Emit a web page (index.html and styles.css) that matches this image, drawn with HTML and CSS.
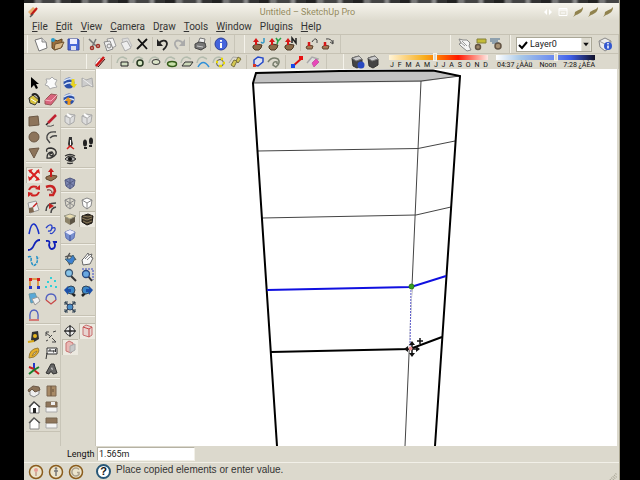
FILE: index.html
```html
<!DOCTYPE html>
<html lang="en">
<head>
  <meta charset="UTF-8" />
  <meta name="viewport" content="width=device-width, initial-scale=1.0"/>
  <title>Untitled - SketchUp Pro</title>
  <link rel="stylesheet" href="styles.css">
</head>
<body>
  <!-- Icon set -->
  <svg class="icons" aria-hidden="true">
    <symbol id="new" viewBox="0 0 16 16"><path d="M2 4l7-2 4 4 1 6-8 3z" fill="#fff" stroke="#777"/><path d="M9 2l0 4h4" fill="#ddd" stroke="#888"/></symbol>
    <symbol id="open" viewBox="0 0 16 16"><path d="M3 5l4-1 1 1 5-2v8l-7 3-3-2z" fill="#9a6f3c" stroke="#5e4425"/><path d="M6 8l9-2-3 6-7 2z" fill="#d9b98a" stroke="#6e5330"/><circle cx="4" cy="4" r="2" fill="#2a9ac8"/></symbol>
    <symbol id="save" viewBox="0 0 16 16"><path d="M3 3h10l1 1v10H3z" fill="#4a68d8" stroke="#3848a0"/><path d="M5 3h7v5H5z" fill="#eef"/><path d="M6 10h5v4H6z" fill="#dde"/></symbol>
    <symbol id="cut" viewBox="0 0 16 16"><path d="M3 3l7 7M10 3l-4 8" stroke="#777" stroke-width="1.500"/><circle cx="6" cy="12" r="1.500" fill="none" stroke="#a03028" stroke-width="1.500"/><circle cx="12" cy="10" r="1.500" fill="none" stroke="#a03028" stroke-width="1.500"/></symbol>
    <symbol id="copy" viewBox="0 0 16 16"><path d="M5 3l6-1 3 8-6 3z" fill="#f4f4f4" stroke="#999"/><path d="M2 6l6-1 3 8-6 2z" fill="#eee" stroke="#888"/><circle cx="7" cy="10" r="2" fill="none" stroke="#888"/></symbol>
    <symbol id="paste" viewBox="0 0 16 16"><path d="M4 3l6-1 4 8-7 3z" fill="#ddd" stroke="#bbb"/><path d="M3 7l6-2 4 7-6 3z" fill="#eee" stroke="#aaa"/></symbol>
    <symbol id="delete" viewBox="0 0 16 16"><path d="M4 3l9 10M13 3L3 13" stroke="#111" stroke-width="1.800"/></symbol>
    <symbol id="undo" viewBox="0 0 16 16"><path d="M4 7c6-6 12 0 4 7" fill="none" stroke="#222" stroke-width="1.800"/><path d="M2 3v7h6z" fill="#222"/></symbol>
    <symbol id="redo" viewBox="0 0 16 16"><path d="M12 7C6 1 0 7 7 13" fill="none" stroke="#aaa" stroke-width="1.800"/><path d="M14 3v7H8z" fill="#aaa"/></symbol>
    <symbol id="print" viewBox="0 0 16 16"><path d="M6 7l2-5 5 1-1 5z" fill="#eee" stroke="#777"/><path d="M3 8l4-2 6 1 1 4-5 3-6-2z" fill="#777" stroke="#444"/><path d="M5 10l6 1" stroke="#ccc"/></symbol>
    <symbol id="info" viewBox="0 0 16 16"><circle cx="8" cy="8" r="6" fill="#4464dc" stroke="#2c409c"/><path d="M8 7v5M8 4v1.800" stroke="#fff" stroke-width="2"/></symbol>
    <symbol id="tray" viewBox="0 0 16 16"><path d="M3 10l3-2 6 1-1 3-2 2-4 0-2-2z" fill="#8c6c4a" stroke="#4c3824"/><path d="M6 9V5" stroke="#d81818" stroke-width="2"/><path d="M3 6L6 2l3 4z" fill="#d81818"/></symbol>
    <symbol id="tray-get" viewBox="0 0 16 16"><use href="#tray"/><path d="M14 2v4q-1 2-3 0" fill="none" stroke="#3098c8" stroke-width="1.500"/></symbol>
    <symbol id="tray-share" viewBox="0 0 16 16"><use href="#tray"/><path d="M10 2l2 3 3-3M12 5l-1 3" fill="none" stroke="#28a048" stroke-width="1.500"/></symbol>
    <symbol id="tray-next" viewBox="0 0 16 16"><use href="#tray"/><path d="M10 7V2l4 5V2" fill="none" stroke="#222" stroke-width="1.500"/></symbol>
    <symbol id="tray-left" viewBox="0 0 16 16"><path d="M3 11l3-2 4 1-1 3H4z" fill="#a47a58" stroke="#5c442c"/><path d="M6 10V6" stroke="#d81818" stroke-width="2.500"/><path d="M9 6q3-5 5-2v3" fill="none" stroke="#444"/></symbol>
    <symbol id="tray-right" viewBox="0 0 16 16"><path d="M3 11l3-2 4 1-1 3H4z" fill="#a47a58" stroke="#5c442c"/><path d="M6 10V6" stroke="#d81818" stroke-width="2.500"/><path d="M7 3q5-1 7 4M11 6l3 2 0-4" fill="none" stroke="#444"/></symbol>
    <symbol id="hand" viewBox="0 0 16 16"><path d="M3 3l4 1 4 0 3 3-1 3 2 4-4 1-5-4-3-3 2-1z" fill="#f4f4f4" stroke="#888"/><path d="M6 5l5 5M4 6l5 4" stroke="#999"/></symbol>
    <symbol id="gear-note" viewBox="0 0 16 16"><path d="M5 3h9v4H5z" fill="#c4bc38" stroke="#85803a"/><circle cx="6" cy="11" r="2.500" fill="#9c866a" stroke="#635444" stroke-width="1.500"/></symbol>
    <symbol id="gear-page" viewBox="0 0 16 16"><path d="M2 3h10M2 5h8M4 7h7" stroke="#768fa4" stroke-width="1.500"/><circle cx="10" cy="10" r="3" fill="#a89274" stroke="#635444" stroke-width="1.500"/></symbol>
    <symbol id="layer-info" viewBox="0 0 16 16"><path d="M2 5l6-3 6 3-1 7-5 3-5-4z" fill="#ececec" stroke="#888"/><path d="M2 5l6 3 6-3" fill="none" stroke="#999"/><circle cx="11" cy="10" r="4" fill="#3458d0"/><path d="M11 9.500v3M11 7v1.500" stroke="#fff" stroke-width="1.500"/></symbol>
    <symbol id="crayon" viewBox="0 0 16 16"><path d="M3 9L7 4l4 1-4 7-3 1z" fill="#fff" stroke="#aaa"/><path d="M4 12L12 3" stroke="#d01818" stroke-width="2.500"/><path d="M6 13l7-8" stroke="#400"/></symbol>
    <symbol id="loop" viewBox="0 0 16 16"><path d="M2 9q1-6 6-6l4 2" fill="none" stroke="#b4bcae" stroke-width="1.500"/></symbol>
    <symbol id="sb-rect" viewBox="0 0 16 16"><use href="#loop"/><path d="M6 8h7v4H6z" fill="#d0dcc0" stroke="#222"/></symbol>
    <symbol id="sb-circle" viewBox="0 0 16 16"><use href="#loop"/><circle cx="9" cy="9" r="3" fill="#d4e4c0" stroke="#263820" stroke-width="1.500"/></symbol>
    <symbol id="sb-oval" viewBox="0 0 16 16"><use href="#loop"/><ellipse cx="9" cy="8" rx="4" ry="2.500" fill="#dce4c8" stroke="#333"/></symbol>
    <symbol id="sb-ring" viewBox="0 0 16 16"><use href="#loop"/><ellipse cx="9" cy="10" rx="4.500" ry="2.500" fill="#c8e0a8" stroke="#345c18" stroke-width="1.500"/></symbol>
    <symbol id="sb-para" viewBox="0 0 16 16"><use href="#loop"/><path d="M6 8h8l-3 4H3z" fill="#ccd8b8" stroke="#333"/></symbol>
    <symbol id="sb-arc" viewBox="0 0 16 16"><use href="#loop"/><path d="M3 13Q8 4 14 13" fill="none" stroke="#3090d8" stroke-width="1.500"/></symbol>
    <symbol id="sb-poly" viewBox="0 0 16 16"><use href="#loop"/><circle cx="9" cy="9" r="3.500" fill="#ddc" stroke="#555"/><path d="M5 8h2M10 5h2M12 9h2M8 12h3" stroke="#e8d800" stroke-width="2.500"/></symbol>
    <symbol id="sb-gold" viewBox="0 0 16 16"><path d="M2 9l4-6 8 1" fill="none" stroke="#aaa"/><path d="M4 11l3-5 3 1-3 6zM9 7l2-4 3 2-3 4z" fill="#d4c850" stroke="#7a7240"/></symbol>
    <symbol id="sb-blue" viewBox="0 0 16 16"><path d="M4 11V6l4-3 5 1v4l-5 4z" fill="#dce0ee" stroke="#2448c8" stroke-width="1.500"/><path d="M3 10h3v3H3z" fill="#d83828"/></symbol>
    <symbol id="sb-swirl" viewBox="0 0 16 16"><path d="M2 8q4-6 10-3 3 4-2 8l-3-2q0-4 4-3l0 2" fill="none" stroke="#777d6c" stroke-width="1.500"/></symbol>
    <symbol id="sb-line" viewBox="0 0 16 16"><path d="M4 12l9-8" stroke="#d81010" stroke-width="2"/><path d="M2 10h4v4H2z" fill="#1848e8"/><path d="M10 2h4v4h-4z" fill="#e81010"/></symbol>
    <symbol id="sb-pink" viewBox="0 0 16 16"><path d="M2 9l5-6 6 2-4 6" fill="#ddd" stroke="#aaa" stroke-width="1.500"/><path d="M7 9l4-4 3 3-5 5z" fill="#e848b8" stroke="#c858a8"/></symbol>
    <symbol id="box" viewBox="0 0 16 16"><path d="M3 4l7-2 3 3v6l-5 3-4-2z" fill="#444" stroke="#333"/><path d="M3 4l7-2 3 3-6 2z" fill="#ccc" stroke="#777"/></symbol>
    <symbol id="box-info" viewBox="0 0 16 16"><use href="#box"/><circle cx="12" cy="11" r="3.500" fill="#2848c0"/></symbol>

    <symbol id="select" viewBox="0 0 16 16"><path d="M5 2v11l3-3 2 4 2-1-2-4h3z" fill="#000"/></symbol>
    <symbol id="component" viewBox="0 0 16 16"><path d="M3 4l4 0 2-2 2 2 3 1-2 4 2 3-5 1-2 1-2-3-3-1 2-3z" fill="#fafafa" stroke="#aaa"/></symbol>
    <symbol id="paint" viewBox="0 0 16 16"><path d="M3 7l4-3 6 5-4 5-5-2z" fill="#d8c440" stroke="#333"/><path d="M6 4q4-3 7 3v5" fill="none" stroke="#222" stroke-width="2"/><path d="M5 8l5 3" stroke="#fff"/></symbol>
    <symbol id="eraser" viewBox="0 0 16 16"><path d="M2 9l6-6 6 1-1 4-5 6-6-1z" fill="#d8647c" stroke="#955"/><path d="M2 9l6 1 6-6" fill="none" stroke="#f4b4c0"/></symbol>
    <symbol id="rect" viewBox="0 0 16 16"><path d="M3 4l9-1 1 9-10 1z" fill="#8d745a" stroke="#6c5844"/></symbol>
    <symbol id="pencil" viewBox="0 0 16 16"><path d="M5 10l8-8" stroke="#c02030" stroke-width="2.500"/><path d="M3 12l2-2" stroke="#222" stroke-width="1.500"/><path d="M4 13q4 1 7-1" fill="none" stroke="#555"/></symbol>
    <symbol id="circle" viewBox="0 0 16 16"><circle cx="8" cy="8" r="5" fill="#8d745a" stroke="#6c5844"/></symbol>
    <symbol id="arc" viewBox="0 0 16 16"><path d="M13 3Q3 2 4 10l3 4M7 9q3-3 7-2" fill="none" stroke="#444" stroke-width="1.300"/></symbol>
    <symbol id="polygon" viewBox="0 0 16 16"><path d="M3 4l10-1-5 10z" fill="#8d745a" stroke="#6c5844"/></symbol>
    <symbol id="freehand" viewBox="0 0 16 16"><path d="M4 7q-2-4 4-4 6 1 5 6-4 5-9 4 0-6 5-6 3 3-1 4-3-2 1-3" fill="none" stroke="#333" stroke-width="1.300"/></symbol>
    <symbol id="move" viewBox="0 0 16 16"><path d="M4 4l8 8M12 4l-8 8" stroke="#d82020" stroke-width="2"/><path d="M2 3l5-1-3 4zM13 2l1 5-4-3zM3 14l-1-5 4 3zM14 13l-5 1 3-4z" fill="#d82020"/></symbol>
    <symbol id="pushpull" viewBox="0 0 16 16"><path d="M3 10l5-2 6 1-1 2-5 3-5-2z" fill="#947050" stroke="#604830"/><path d="M8 10V5" stroke="#c81c1c" stroke-width="2"/><path d="M5 5l3-4 3 4z" fill="#c81c1c"/></symbol>
    <symbol id="rotate" viewBox="0 0 16 16"><path d="M3 7q2-5 8-3M13 9q-2 5-8 3" fill="none" stroke="#d02020" stroke-width="2"/><path d="M9 6l5 1V2zM7 10l-5-1v5z" fill="#d02020"/></symbol>
    <symbol id="follow" viewBox="0 0 16 16"><path d="M3 4q8-3 9 4l-2 4H6" fill="none" stroke="#c82424" stroke-width="2.500"/><path d="M4 7q5-1 5 3" fill="none" stroke="#622"/></symbol>
    <symbol id="scale" viewBox="0 0 16 16"><path d="M2 4l8-2 3 9-9 3z" fill="#eee" stroke="#999"/><path d="M3 9l4-1 1 5-5 1z" fill="#806850"/><path d="M7 8l4-4" stroke="#c82020" stroke-width="1.500"/></symbol>
    <symbol id="offset" viewBox="0 0 16 16"><path d="M3 12Q3 4 13 4M8 14q0-5 5-6" fill="none" stroke="#444" stroke-width="1.500"/><path d="M6 4l5 3-5 3z" fill="#c82020"/></symbol>
    <symbol id="bz1" viewBox="0 0 16 16"><path d="M3 13Q5 2 8 3t5 10" fill="none" stroke="#1830c8" stroke-width="1.500"/></symbol>
    <symbol id="bz2" viewBox="0 0 16 16"><path d="M3 7q4-5 6-2 0 6-4 5M8 8q5-3 4 1-3 5-5 3" fill="none" stroke="#2840c8" stroke-width="1.300"/></symbol>
    <symbol id="bz3" viewBox="0 0 16 16"><path d="M2 13q4 0 6-5t6-5" fill="none" stroke="#1020b8" stroke-width="1.800"/></symbol>
    <symbol id="bz4" viewBox="0 0 16 16"><path d="M3 4q5-1 3 4 1 6 5 3 2-2 0-6l3 0" fill="none" stroke="#1020b8" stroke-width="1.800"/></symbol>
    <symbol id="bz5" viewBox="0 0 16 16"><path d="M2 4q4-2 3 4 2 7 5 3 2-2 1-7l2 1" fill="none" stroke="#2090c8" stroke-width="1.500" stroke-dasharray="3 1"/></symbol>
    <symbol id="pts" viewBox="0 0 16 16"><path d="M4 13V4h8v9" fill="none" stroke="#d88828" stroke-width="1.500"/><path d="M3 3h3v3H3zM11 3h3v3h-3z" fill="#d82020"/><path d="M3 11h3v3H3zM11 11h3v3h-3z" fill="#2838c8"/></symbol>
    <symbol id="dots" viewBox="0 0 16 16"><path d="M7 3h2M4 7h2M11 6h2M2 12h2M7 11h2M12 12h2" stroke="#30d0d8" stroke-width="2"/></symbol>
    <symbol id="pages" viewBox="0 0 16 16"><path d="M3 3l6-1 3 8-7 2z" fill="#58a8d8" stroke="#69a"/><path d="M6 8l6-2 2 4-5 4z" fill="#eee" stroke="#999"/></symbol>
    <symbol id="loop1" viewBox="0 0 16 16"><path d="M3 9q0-6 5-6t5 6" fill="none" stroke="#5060c0" stroke-width="1.300"/><path d="M3 9l5 4 5-4" fill="none" stroke="#c84848" stroke-width="1.300"/></symbol>
    <symbol id="loop2" viewBox="0 0 16 16"><path d="M4 12Q3 3 8 3t4 9" fill="none" stroke="#5060c0" stroke-width="1.300"/><path d="M3 13h10" stroke="#d04848" stroke-width="1.300"/></symbol>
    <symbol id="tape" viewBox="0 0 16 16"><path d="M6 3l6-1 1 8-5 3-3-2z" fill="#333"/><circle cx="9" cy="7" r="2" fill="#e8b820"/><path d="M2 13l6-1" stroke="#d8a818" stroke-width="2"/></symbol>
    <symbol id="dimension" viewBox="0 0 16 16"><path d="M3 4l4 3M9 9l4 4M3 7V3h3M9 13h4M10 3l3-1M3 12l2-1M6 9l3-3" fill="none" stroke="#444"/></symbol>
    <symbol id="protractor" viewBox="0 0 16 16"><path d="M3 13Q3 4 12 3q3 4-4 9z" fill="#e8b028" stroke="#9c7c34"/><path d="M6 11q1-4 5-5-1 3-5 5z" fill="#dcd9cd" stroke="#9c7c34"/></symbol>
    <symbol id="text" viewBox="0 0 16 16"><path d="M4 3h10v6H4z" fill="#f4f4f4" stroke="#333"/><path d="M6 7V5h2v2M10 5v2h1V5M12.500 4v3M4 8l-1 6" fill="none" stroke="#333"/></symbol>
    <symbol id="axes" viewBox="0 0 16 16"><path d="M8 9V2" stroke="#2038c8" stroke-width="2"/><path d="M8 9l5 4M8 8L3 6" stroke="#c82020" stroke-width="2"/><path d="M8 9l-5 4M8 9l5-3" stroke="#18802c" stroke-width="2"/></symbol>
    <symbol id="text3d" viewBox="0 0 16 16"><path d="M3 12l5-9h3l3 9-4 1-1-2H7l-1 2z" fill="#666" stroke="#333"/><path d="M8 8l1-2 1 3z" fill="#ddd"/></symbol>
    <symbol id="iso" viewBox="0 0 16 16"><path d="M4 8v4l4 2 5-3V7" fill="#eee" stroke="#888"/><path d="M2 7l5-4 6 1 1 3-5 2-3-3-3 3z" fill="#8c7358" stroke="#6c5846"/></symbol>
    <symbol id="top" viewBox="0 0 16 16"><path d="M4 3h9v10H4z" fill="#a88a66" stroke="#7c6650"/><path d="M8 3v10M10 6v3" stroke="#644e38"/></symbol>
    <symbol id="front" viewBox="0 0 16 16"><path d="M4 8v6h9V8L8 3z" fill="#fff" stroke="#777"/><path d="M3 8l5-5 6 5" fill="none" stroke="#444" stroke-width="1.300"/><path d="M7 9h3v5H7z" fill="#222"/></symbol>
    <symbol id="right" viewBox="0 0 16 16"><path d="M3 7h11v6H3z" fill="#f4f4f4" stroke="#aaa"/><path d="M3 3h11v5H3z" fill="#8f765c" stroke="#77644f"/><path d="M8 3h4v3H8z" fill="#eee"/></symbol>
    <symbol id="back" viewBox="0 0 16 16"><path d="M4 8v6h9V8L8 3z" fill="#fff" stroke="#888"/><path d="M3 8l5-5 6 5" fill="none" stroke="#555" stroke-width="1.300"/></symbol>
    <symbol id="left" viewBox="0 0 16 16"><path d="M3 7h11v6H3z" fill="#f4f4f4" stroke="#aaa"/><path d="M3 3h11v5H3z" fill="#8f765c" stroke="#77644f"/></symbol>

    <symbol id="earth" viewBox="0 0 16 16"><circle cx="7" cy="8" r="5.500" fill="#2c50a8"/><path d="M2 6q5-4 10-1M2 10q5-4 10-1" fill="none" stroke="#dce8fa" stroke-width="1.500"/></symbol>
    <symbol id="earth-get" viewBox="0 0 16 16"><use href="#earth"/><path d="M11 4v6" stroke="#e8d420" stroke-width="3"/><path d="M8 9h7l-3 4z" fill="#e8d420"/></symbol>
    <symbol id="earth-put" viewBox="0 0 16 16"><use href="#earth"/><path d="M7 9v5" stroke="#e89820" stroke-width="3"/><path d="M3 10h7L6 6z" fill="#e89820"/></symbol>
    <symbol id="terrain" viewBox="0 0 16 16"><path d="M3 3l4 2 6-2 1 9-5-2-6 2z" fill="#ccc" stroke="#aaa"/><path d="M4 4l9 7" stroke="#eee"/></symbol>
    <symbol id="share" viewBox="0 0 16 16"><path d="M3 5l4-2 6 1-1 7-5 3-4-3z" fill="#ddd" stroke="#aaa"/><path d="M3 5l5 2 5-3M8 7v6" fill="none" stroke="#aaa"/><path d="M5 3l4 3" stroke="#fff" stroke-width="2"/></symbol>
    <symbol id="position" viewBox="0 0 16 16"><path d="M7 2h3v3l1 4-2 3H7L6 9z" fill="#333"/><path d="M8.500 5v5" stroke="#fff"/><path d="M5 14l3-3 4 3" fill="none" stroke="#d82020" stroke-width="1.500"/></symbol>
    <symbol id="walk" viewBox="0 0 16 16"><ellipse cx="6" cy="8" rx="2" ry="3.500" fill="#222"/><ellipse cx="12" cy="6" rx="2" ry="3.500" fill="#222"/><path d="M5 13h3M10 11h3" stroke="#222" stroke-width="2"/></symbol>
    <symbol id="look" viewBox="0 0 16 16"><path d="M3 8q5-6 11 0-5 5-11 0z" fill="#777" stroke="#333"/><path d="M3 5q5-3 10 0M5 12q3 1 6 0" fill="none" stroke="#333" stroke-width="1.300"/><circle cx="8" cy="8" r="2" fill="#111"/><path d="M4 8h2M10 8h2" stroke="#ddd"/></symbol>
    <symbol id="xray" viewBox="0 0 16 16"><path d="M3 5l5-2 5 2-1 6-4 3-4-3z" fill="#7c86b0" stroke="#545c84"/><path d="M3 5l5 3 5-3M8 3v11M4 11l4-3 4 3" fill="none" stroke="#545c84"/></symbol>
    <symbol id="wire" viewBox="0 0 16 16"><path d="M3 5l5-2 5 2-1 6-4 3-4-3zM3 5l5 3 5-3M8 3v11M4 11l4-3 4 3" fill="none" stroke="#888"/></symbol>
    <symbol id="hidden" viewBox="0 0 16 16"><path d="M3 5l5-2 5 2-1 6-4 3-4-3z" fill="#fff" stroke="#888"/><path d="M3 5l5 3 5-3M8 8v6" fill="none" stroke="#888"/></symbol>
    <symbol id="shaded" viewBox="0 0 16 16"><path d="M3 5v6l5 3V8z" fill="#8c8268"/><path d="M13 5v6l-5 3V8z" fill="#5c5444"/><path d="M2 5l6-2 6 2-6 3z" fill="#e8dcb0" stroke="#998"/></symbol>
    <symbol id="textured" viewBox="0 0 16 16"><path d="M3 5l6-2 5 2-1 7-5 2-5-3z" fill="#3c3428" stroke="#181410"/><path d="M3 7l5 2 5-2M4 10l4 2 5-2M4 5l5 1 4-1" fill="none" stroke="#8c7c5c"/></symbol>
    <symbol id="mono" viewBox="0 0 16 16"><path d="M3 5l5-2 5 2-1 6-4 3-4-3z" fill="#7890d0" stroke="#6070b0"/><path d="M3 5l5-2 5 2-5 3z" fill="#eef"/><path d="M8 8v6" stroke="#405090"/></symbol>
    <symbol id="orbit" viewBox="0 0 16 16"><path d="M8 2q-5 6 0 12M3 6q7-3 11 3" fill="none" stroke="#555" stroke-width="1.300"/><path d="M3 8l5 0 3-4 2 4-3 5-3-1z" fill="#3c80d0" stroke="#467"/></symbol>
    <symbol id="pan" viewBox="0 0 16 16"><path d="M4 14l-1-5 2-2 4-5 1 2 3-1-1 3 2 1-3 6z" fill="#f8f8f8" stroke="#666"/><path d="M6 8l4-4M8 9l4-4" stroke="#888"/></symbol>
    <symbol id="zoom" viewBox="0 0 16 16"><path d="M9 9l5 5" stroke="#333" stroke-width="2"/><circle cx="7" cy="6" r="3.500" fill="#88c4e8" stroke="#3c5874" stroke-width="1.300"/></symbol>
    <symbol id="zoomwin" viewBox="0 0 16 16"><path d="M3 2h11v11" fill="none" stroke="#3848c8" stroke-dasharray="2 1"/><path d="M9 9l4 5" stroke="#333" stroke-width="2"/><circle cx="7" cy="7" r="3.500" fill="#68a8e0" stroke="#284880" stroke-width="1.300"/></symbol>
    <symbol id="prev" viewBox="0 0 16 16"><path d="M9 9l4 4" stroke="#222" stroke-width="2.500"/><circle cx="9" cy="7" r="4" fill="#3c88c8" stroke="#345"/><path d="M2 7l4-4v3h3v3H6v3z" fill="#1c50a8"/></symbol>
    <symbol id="next" viewBox="0 0 16 16"><path d="M7 9l-4 4" stroke="#222" stroke-width="2.500"/><circle cx="7" cy="7" r="4" fill="#3c88c8" stroke="#345"/><path d="M14 7l-4-4v3H7v3h3v3z" fill="#1c50a8"/></symbol>
    <symbol id="extents" viewBox="0 0 16 16"><path d="M3 3l10 10M13 3L3 13" stroke="#345" stroke-width="1.500"/><path d="M3 6V3h3M10 3h3v3M3 10v3h3M13 10v3h-3" fill="none" stroke="#345"/><circle cx="8" cy="8" r="3" fill="#4c90c8" stroke="#346"/></symbol>
    <symbol id="section" viewBox="0 0 16 16"><circle cx="8" cy="8" r="4.500" fill="#eee" stroke="#333"/><path d="M8 2v12M2 8h12" stroke="#333" stroke-width="1.300"/><circle cx="8" cy="8" r="1.500" fill="#333"/></symbol>
    <symbol id="sec-plane" viewBox="0 0 16 16"><path d="M4 4l3-2 6 2v8l-3 2-6-2z" fill="#e8d4d0" stroke="#c87070"/><path d="M4 4l6 2v8M10 6l3-2" fill="none" stroke="#c84848"/></symbol>
    <symbol id="sec-cut" viewBox="0 0 16 16"><path d="M4 4l3-2 4 2v8l-2 2-5-2z" fill="#e8b8b4" stroke="#c87070"/><path d="M8 7l5-2v6l-5 3z" fill="#c8c8c8" stroke="#aaa"/></symbol>
    <symbol id="leaf" viewBox="0 0 12 12"><path d="M1 11q2-2 2-5 3-2 6-3l2-2q0 4-3 6-3 2-4 2z" fill="#91834e"/></symbol>
  </svg>

  <div class="window">
    <header class="titlebar">
      <svg class="logo" viewBox="0 0 12 12"><path d="M1 6l5-5 4 3-5 6z" fill="#e8b070"/><path d="M4 9l6-7" stroke="#c01818" stroke-width="2"/><path d="M3 11l3-3" stroke="#555" stroke-width="1.500"/></svg>
      <h1>Untitled – SketchUp Pro</h1>
      <div class="winbtns">
        <button title="Shade"><svg viewBox="0 0 12 12"><path d="M5 3v6L2 6zM7 3v6l3-3z" fill="#fff"/></svg></button>
        <button title="Tray"><svg viewBox="0 0 12 12"><path d="M2 2.500h8v7H2zM2 4h8M4 7h4" fill="none" stroke="#fff"/></svg></button>
        <button title="Minimize"><svg><use href="#leaf"/></svg></button>
        <button title="Maximize"><svg><use href="#leaf"/></svg></button>
        <button title="Close"><svg><use href="#leaf"/></svg></button>
      </div>
    </header>

    <nav class="menu">
      <a href="#"><u>F</u>ile</a>
      <a href="#"><u>E</u>dit</a>
      <a href="#"><u>V</u>iew</a>
      <a href="#"><u>C</u>amera</a>
      <a href="#">D<u>r</u>aw</a>
      <a href="#"><u>T</u>ools</a>
      <a href="#"><u>W</u>indow</a>
      <a href="#">Plugins</a>
      <a href="#"><u>H</u>elp</a>
    </nav>

    <div class="toolbar main">
      <div class="bar">
        <button class="tool" title="New"><svg><use href="#new"/></svg></button>
        <button class="tool" title="Open"><svg><use href="#open"/></svg></button>
        <button class="tool" title="Save"><svg><use href="#save"/></svg></button>
        <i class="sep"></i>
        <button class="tool" title="Cut"><svg><use href="#cut"/></svg></button>
        <button class="tool" title="Copy"><svg><use href="#copy"/></svg></button>
        <button class="tool" title="Paste"><svg><use href="#paste"/></svg></button>
        <button class="tool" title="Erase"><svg><use href="#delete"/></svg></button>
        <i class="sep"></i>
        <button class="tool" title="Undo"><svg><use href="#undo"/></svg></button>
        <button class="tool" title="Redo"><svg><use href="#redo"/></svg></button>
        <i class="sep"></i>
        <button class="tool" title="Print"><svg><use href="#print"/></svg></button>
        <i class="sep"></i>
        <button class="tool" title="Model Info"><svg><use href="#info"/></svg></button>
      </div>
      <div class="bar spaced">
        <button class="tool" title="Joint Push Pull"><svg><use href="#tray-get"/></svg></button>
        <button class="tool" title="Vector Push Pull"><svg><use href="#tray-share"/></svg></button>
        <button class="tool" title="Normal Push Pull"><svg><use href="#tray-next"/></svg></button>
        <i class="sep"></i>
        <button class="tool" title="Undo Push Pull"><svg><use href="#tray-left"/></svg></button>
        <button class="tool" title="Redo Push Pull"><svg><use href="#tray-right"/></svg></button>
      </div>
      <div class="bar far">
        <button class="tool" title="Interact"><svg><use href="#hand"/></svg></button>
        <button class="tool" title="Component Options"><svg><use href="#gear-note"/></svg></button>
        <button class="tool" title="Component Attributes"><svg><use href="#gear-page"/></svg></button>
      </div>
      <div class="bar layers">
        <div class="layer">
          <svg class="tick" viewBox="0 0 10 10"><path d="M1 5l3 3 5-6" fill="none" stroke="#000" stroke-width="2"/></svg>
          <select aria-label="Layer"><option>Layer0</option></select>
          <svg class="drop" viewBox="0 0 10 14"><path d="M0 0h10v14H0z" fill="#dcd9cd"/><path d="M2 5h6L5 9z" fill="#111"/></svg>
        </div>
        <button class="tool" title="Layer Manager"><svg><use href="#layer-info"/></svg></button>
      </div>
    </div>

    <div class="toolbar second">
      <div class="bar">
        <button class="tool" title="Sketchy Bevel"><svg><use href="#crayon"/></svg></button>
        <i class="sep"></i>
        <button class="tool" title="Rectangle"><svg><use href="#sb-rect"/></svg></button>
        <button class="tool" title="Circle"><svg><use href="#sb-circle"/></svg></button>
        <button class="tool" title="Oval"><svg><use href="#sb-oval"/></svg></button>
        <button class="tool" title="Ring"><svg><use href="#sb-ring"/></svg></button>
        <button class="tool" title="Parallelogram"><svg><use href="#sb-para"/></svg></button>
        <button class="tool" title="Arc"><svg><use href="#sb-arc"/></svg></button>
        <button class="tool" title="Polygon"><svg><use href="#sb-poly"/></svg></button>
        <button class="tool" title="Extrude"><svg><use href="#sb-gold"/></svg></button>
        <i class="sep"></i>
        <button class="tool" title="Outline"><svg><use href="#sb-blue"/></svg></button>
        <button class="tool" title="Swirl"><svg><use href="#sb-swirl"/></svg></button>
        <i class="sep"></i>
        <button class="tool" title="Line"><svg><use href="#sb-line"/></svg></button>
        <button class="tool" title="Erase Path"><svg><use href="#sb-pink"/></svg></button>
      </div>
      <div class="bar shadows">
        <button class="tool" title="Shadow Settings"><svg><use href="#box-info"/></svg></button>
        <button class="tool" title="Display Shadows"><svg><use href="#box"/></svg></button>
        <div class="slider">
          <input class="date" type="range" min="0" max="100" value="46" aria-label="Date">
          <div class="marks"><span>J</span><span>F</span><span>M</span><span>A</span><span>M</span><span>J</span><span>J</span><span>A</span><span>S</span><span>O</span><span>N</span><span>D</span></div>
        </div>
        <div class="slider">
          <input class="time" type="range" min="0" max="100" value="61" aria-label="Time">
          <div class="marks"><span>04:37 ¿ÀÀü</span><span>Noon</span><span>7:28 ¿ÀÈÄ</span></div>
        </div>
      </div>
    </div>

    <main class="work">
      <aside class="palette">
        <div class="col">
          <div class="group">
            <button class="tool" title="Select"><svg><use href="#select"/></svg></button>
            <button class="tool" title="Make Component"><svg><use href="#component"/></svg></button>
            <button class="tool" title="Paint Bucket"><svg><use href="#paint"/></svg></button>
            <button class="tool" title="Eraser"><svg><use href="#eraser"/></svg></button>
          </div>
          <div class="group">
            <button class="tool" title="Rectangle"><svg><use href="#rect"/></svg></button>
            <button class="tool" title="Line"><svg><use href="#pencil"/></svg></button>
            <button class="tool" title="Circle"><svg><use href="#circle"/></svg></button>
            <button class="tool" title="Arc"><svg><use href="#arc"/></svg></button>
            <button class="tool" title="Polygon"><svg><use href="#polygon"/></svg></button>
            <button class="tool" title="Freehand"><svg><use href="#freehand"/></svg></button>
          </div>
          <div class="group">
            <button class="tool on" title="Move"><svg><use href="#move"/></svg></button>
            <button class="tool" title="Push/Pull"><svg><use href="#pushpull"/></svg></button>
            <button class="tool" title="Rotate"><svg><use href="#rotate"/></svg></button>
            <button class="tool" title="Follow Me"><svg><use href="#follow"/></svg></button>
            <button class="tool" title="Scale"><svg><use href="#scale"/></svg></button>
            <button class="tool" title="Offset"><svg><use href="#offset"/></svg></button>
          </div>
          <div class="group">
            <button class="tool" title="Bezier"><svg><use href="#bz1"/></svg></button>
            <button class="tool" title="Polyline"><svg><use href="#bz2"/></svg></button>
            <button class="tool" title="Cubic"><svg><use href="#bz3"/></svg></button>
            <button class="tool" title="Spline"><svg><use href="#bz4"/></svg></button>
            <button class="tool" title="B-Spline"><svg><use href="#bz5"/></svg></button>
          </div>
          <div class="group">
            <button class="tool" title="Control Points"><svg><use href="#pts"/></svg></button>
            <button class="tool" title="Points"><svg><use href="#dots"/></svg></button>
            <button class="tool" title="Pages"><svg><use href="#pages"/></svg></button>
            <button class="tool" title="Close Loop"><svg><use href="#loop1"/></svg></button>
            <button class="tool" title="Close Line"><svg><use href="#loop2"/></svg></button>
          </div>
          <div class="group">
            <button class="tool" title="Tape Measure"><svg><use href="#tape"/></svg></button>
            <button class="tool" title="Dimensions"><svg><use href="#dimension"/></svg></button>
            <button class="tool" title="Protractor"><svg><use href="#protractor"/></svg></button>
            <button class="tool" title="Text"><svg><use href="#text"/></svg></button>
            <button class="tool" title="Axes"><svg><use href="#axes"/></svg></button>
            <button class="tool" title="3D Text"><svg><use href="#text3d"/></svg></button>
          </div>
          <div class="group last">
            <button class="tool" title="Iso"><svg><use href="#iso"/></svg></button>
            <button class="tool" title="Top"><svg><use href="#top"/></svg></button>
            <button class="tool" title="Front"><svg><use href="#front"/></svg></button>
            <button class="tool" title="Right"><svg><use href="#right"/></svg></button>
            <button class="tool" title="Back"><svg><use href="#back"/></svg></button>
            <button class="tool" title="Left"><svg><use href="#left"/></svg></button>
          </div>
        </div>
        <div class="col wide">
          <div class="group">
            <button class="tool" title="Get Current View"><svg><use href="#earth-get"/></svg></button>
            <button class="tool" title="Toggle Terrain"><svg><use href="#terrain"/></svg></button>
            <button class="tool" title="Place Model"><svg><use href="#earth-put"/></svg></button>
          </div>
          <div class="group thin">
            <button class="tool" title="Get Models"><svg><use href="#share"/></svg></button>
            <button class="tool" title="Share Model"><svg><use href="#share"/></svg></button>
          </div>
          <div class="group">
            <button class="tool" title="Position Camera"><svg><use href="#position"/></svg></button>
            <button class="tool" title="Walk"><svg><use href="#walk"/></svg></button>
            <button class="tool" title="Look Around"><svg><use href="#look"/></svg></button>
          </div>
          <div class="group">
            <button class="tool" title="X-Ray"><svg><use href="#xray"/></svg></button>
          </div>
          <div class="group thin">
            <button class="tool" title="Wireframe"><svg><use href="#wire"/></svg></button>
            <button class="tool" title="Hidden Line"><svg><use href="#hidden"/></svg></button>
            <button class="tool" title="Shaded"><svg><use href="#shaded"/></svg></button>
            <button class="tool on" title="Shaded With Textures"><svg><use href="#textured"/></svg></button>
            <button class="tool" title="Monochrome"><svg><use href="#mono"/></svg></button>
          </div>
          <div class="group">
            <button class="tool" title="Orbit"><svg><use href="#orbit"/></svg></button>
            <button class="tool" title="Pan"><svg><use href="#pan"/></svg></button>
            <button class="tool" title="Zoom"><svg><use href="#zoom"/></svg></button>
            <button class="tool" title="Zoom Window"><svg><use href="#zoomwin"/></svg></button>
            <button class="tool" title="Previous"><svg><use href="#prev"/></svg></button>
            <button class="tool" title="Next"><svg><use href="#next"/></svg></button>
            <button class="tool" title="Zoom Extents"><svg><use href="#extents"/></svg></button>
          </div>
          <div class="group">
            <button class="tool" title="Section Plane"><svg><use href="#section"/></svg></button>
            <button class="tool on" title="Display Section Planes"><svg><use href="#sec-plane"/></svg></button>
            <button class="tool on" title="Display Section Cuts"><svg><use href="#sec-cut"/></svg></button>
          </div>
        </div>
      </aside>

      <section class="view">
        <svg class="model" viewBox="96 69 521 377" preserveAspectRatio="xMinYMin meet">
          <path d="M253 83L256 73L433 70L460 76L421 82z" fill="#c3c3c3"/>
          <g fill="none" stroke="#444">
            <path d="M253 83L421 81L460 76M421 81L405 446"/>
            <path d="M257 151L418 148.500L455 141"/>
            <path d="M262 218L416 215L451 207"/>
          </g>
          <g fill="none" stroke="#000" stroke-width="2">
            <path d="M277 446L253 83L256 73L340 71L433 70.500L460 76L435 446"/>
            <path d="M271 352L410 349L442 337"/>
          </g>
          <path d="M411 287L410 348" stroke="#fff" stroke-width="2"/>
          <path d="M411 287L410 348" stroke="#5858c8" stroke-dasharray="2 1"/>
          <path d="M267 290L411 287L446 276" fill="none" stroke="#1010e0" stroke-width="2"/>
          <circle cx="411.500" cy="286.500" r="2.500" fill="#38a020" stroke="#287818"/>
          <!-- move cursor -->
          <g fill="#111">
            <path d="M412 341l3 4h-6zM412 357l3-4h-6zM404 349l4-3v6zM420 349l-4-3v6z"/>
            <path d="M412 344v10M407 349h10M420 338v6M417 341h6" stroke="#111" stroke-width="1.500"/>
          </g>
          <circle cx="410.500" cy="348.500" r="2" fill="#e89090"/>
        </svg>
      </section>
    </main>

    <div class="measure">
      <label for="len">Length</label>
      <input id="len" type="text" value="1.565m">
    </div>

    <footer class="status">
      <svg class="badge" viewBox="0 0 16 16"><circle cx="8" cy="8" r="6.500" fill="#ece4cc" stroke="#8a5c1c" stroke-width="1.500"/><circle cx="8" cy="6" r="2" fill="#e89c94"/><path d="M8 8v4" stroke="#b07868"/></svg>
      <svg class="badge" viewBox="0 0 16 16"><circle cx="8" cy="8" r="6.500" fill="#ece4cc" stroke="#8a5c1c" stroke-width="1.500"/><path d="M8 6v6M6 7h4" stroke="#777" stroke-width="1.500"/><circle cx="8" cy="4.500" r="1.300" fill="#777"/></svg>
      <svg class="badge" viewBox="0 0 16 16"><circle cx="8" cy="8" r="6.500" fill="#ece4cc" stroke="#8a5c1c" stroke-width="1.500"/><path d="M11 5.500A4 4 0 1 0 11 10.500V8.500H9" fill="none" stroke="#aaa08c" stroke-width="1.500"/></svg>
      <button class="help" title="Help">?</button>
      <p>Place copied elements or enter value.</p>
      <svg class="grip" viewBox="0 0 8 8"><path d="M1 8l7-7M4 8l4-4" stroke="#a8a595" stroke-dasharray="1 1" stroke-width="1.500"/></svg>
    </footer>
  </div>
</body>
</html>
```
FILE: styles.css
```css
* {
  box-sizing: border-box;
}

body {
  margin: 0;
  padding: 0 20px 0 24px;
  height: 100vh;
  background: #000;
  color: #333;
  font-family: Roboto, "Liberation Sans", sans-serif;
  font-size: 10px;
  overflow: hidden;
}

.icons {
  position: absolute;
  width: 0;
  height: 0;
}

button {
  padding: 0;
  border: none;
  background: none;
  font: inherit;
}

svg {
  display: block;
}

.window {
  display: flex;
  flex-direction: column;
  height: 100%;
  background: #dcd9cd;
  border-right: 1px solid #aaa590;
}

/* edge of the desktop behind the window */
.window::before {
  content: "";
  flex: none;
  height: 3px;
  background: repeating-linear-gradient(90deg, #222 0 9px, #777 12px 16px, #444 19px 30px, #888 33px 35px, #333 38px 47px);
}

/* title bar */
.titlebar {
  display: flex;
  align-items: center;
  height: 17px;
  padding: 0 5px 0 3px;
  background: linear-gradient(#f6f4ec, #dedbcf);
}

.logo {
  width: 12px;
  height: 12px;
}

.titlebar h1 {
  flex: 1;
  margin: 0;
  padding-left: 34px;
  text-align: center;
  font-size: 9px;
  font-weight: normal;
  color: #958b60;
}

.winbtns {
  display: flex;
  gap: 3px;
}

.winbtns button,
.winbtns svg {
  width: 12px;
  height: 12px;
}

/* menu */
.menu {
  display: flex;
  gap: 8px;
  height: 14px;
  padding-left: 8px;
  line-height: 14px;
}

.menu a {
  color: #333;
  text-decoration: none;
}

/* toolbars */
.toolbar {
  display: flex;
  border-top: 1px solid #c6c2b4;
}

.main {
  height: 19px;
}

.second {
  height: 16px;
  padding-left: 62px;
}

.bar {
  display: flex;
  align-items: center;
  padding: 0 5px;
  border-left: 1px solid #f4f2ea;
  border-right: 1px solid #c8c5b8;
}

.main .bar:first-child {
  margin-left: 3px;
}

.main .spaced {
  margin-left: 9px;
}

.main .far {
  margin-left: auto;
}

.tool {
  flex: none;
  width: 16px;
  height: 16px;
}

.tool svg {
  width: 16px;
  height: 16px;
}

.tool.on {
  background: #ece9e0;
  box-shadow: inset 1px 1px #bdb9aa;
}

.sep {
  width: 1px;
  height: 14px;
  margin: 0 2px;
  background: #c6c2b4;
}

.second .sep {
  margin: 0 3px;
}

.layers {
  gap: 5px;
}

.layer {
  position: relative;
  width: 76px;
}

.layer select {
  display: block;
  width: 100%;
  height: 15px;
  padding: 0 0 0 13px;
  border: 1px solid #aaa797;
  border-radius: 0;
  background: #fff;
  color: #222;
  font: 9px Roboto, sans-serif;
  appearance: none;
}

.tick {
  position: absolute;
  top: 3px;
  left: 2px;
  width: 10px;
  height: 10px;
}

.drop {
  position: absolute;
  top: 1px;
  right: 1px;
  width: 10px;
  height: 13px;
}

/* date and time sliders */
.shadows {
  flex: 1;
  margin-left: 16px;
}

.slider {
  width: 99px;
  margin-left: 8px;
}

.slider input {
  display: block;
  width: 100%;
  height: 5px;
  margin: 0 0 1px;
  appearance: none;
}

.date {
  background: linear-gradient(90deg, #fff4d8, #f8b020 35%, #ff7800 50%, #ff1800 70%, #ffe8e4);
}

.time {
  background: linear-gradient(90deg, #fff, #a8c8e8 25%, #6888f0 60%, #4060e8 75%, #101028);
}

.slider input::-webkit-slider-thumb {
  appearance: none;
  width: 4px;
  height: 8px;
  background: #dcd9cd;
  border: 1px solid #f4f2ea;
}

.marks {
  display: flex;
  justify-content: space-between;
  height: 8px;
  padding-left: 1px;
  font-size: 7px;
  line-height: 8px;
  color: #111;
}

/* drawing area */
.work {
  flex: 1;
  display: flex;
  min-height: 0;
}

.palette {
  flex: none;
  display: flex;
  width: 72px;
  padding-left: 2px;
}

.col {
  width: 35px;
  border-right: 1px solid #c8c5b8;
}

.group {
  display: flex;
  flex-wrap: wrap;
  gap: 0 1px;
  border-top: 1px solid #c6c2b4;
  padding-top: 5px;
  box-shadow: inset 0 1px #f2f0e8;
}

.wide .group {
  padding: 7px 0 0 1px;
}

.wide .group:first-child {
  padding-top: 5px;
}

.wide .thin {
  padding-top: 3px;
}

.last {
  border-bottom: 1px solid #c6c2b4;
}

.view {
  flex: 1;
  margin-right: 2px;
  background: #fff;
}

.model {
  width: 100%;
  height: 100%;
}

/* measurement box */
.measure {
  display: flex;
  align-items: center;
  gap: 2px;
  height: 17px;
  padding-left: 43px;
  border-bottom: 1px solid #f2f0e8;
  font: 9px Roboto, "Liberation Sans", sans-serif;
}

.measure label {
  width: 28px;
  white-space: nowrap;
  color: #111;
}

.measure input {
  width: 98px;
  height: 14px;
  padding: 0 1px;
  border: 1px solid #b5b2a4;
  border-right-color: #f2f0e8;
  border-bottom-color: #f2f0e8;
  background: #fff;
  color: #222;
  font: inherit;
}

/* status bar */
.status {
  display: flex;
  align-items: center;
  gap: 4px;
  height: 17px;
  padding-left: 4px;
}

.badge {
  width: 16px;
  height: 16px;
}

.help {
  width: 15px;
  height: 15px;
  margin: 0 1px 0 8px;
  border: 2px solid #285878;
  border-radius: 50%;
  background: #fff;
  color: #111;
  font: bold 11px/11px "Liberation Sans", sans-serif;
}

.status p {
  margin: 0;
  padding-bottom: 4px;
  font: 10px "Liberation Sans", sans-serif;
}

.grip {
  width: 8px;
  height: 8px;
  margin: 8px 2px 0 auto;
}
```
